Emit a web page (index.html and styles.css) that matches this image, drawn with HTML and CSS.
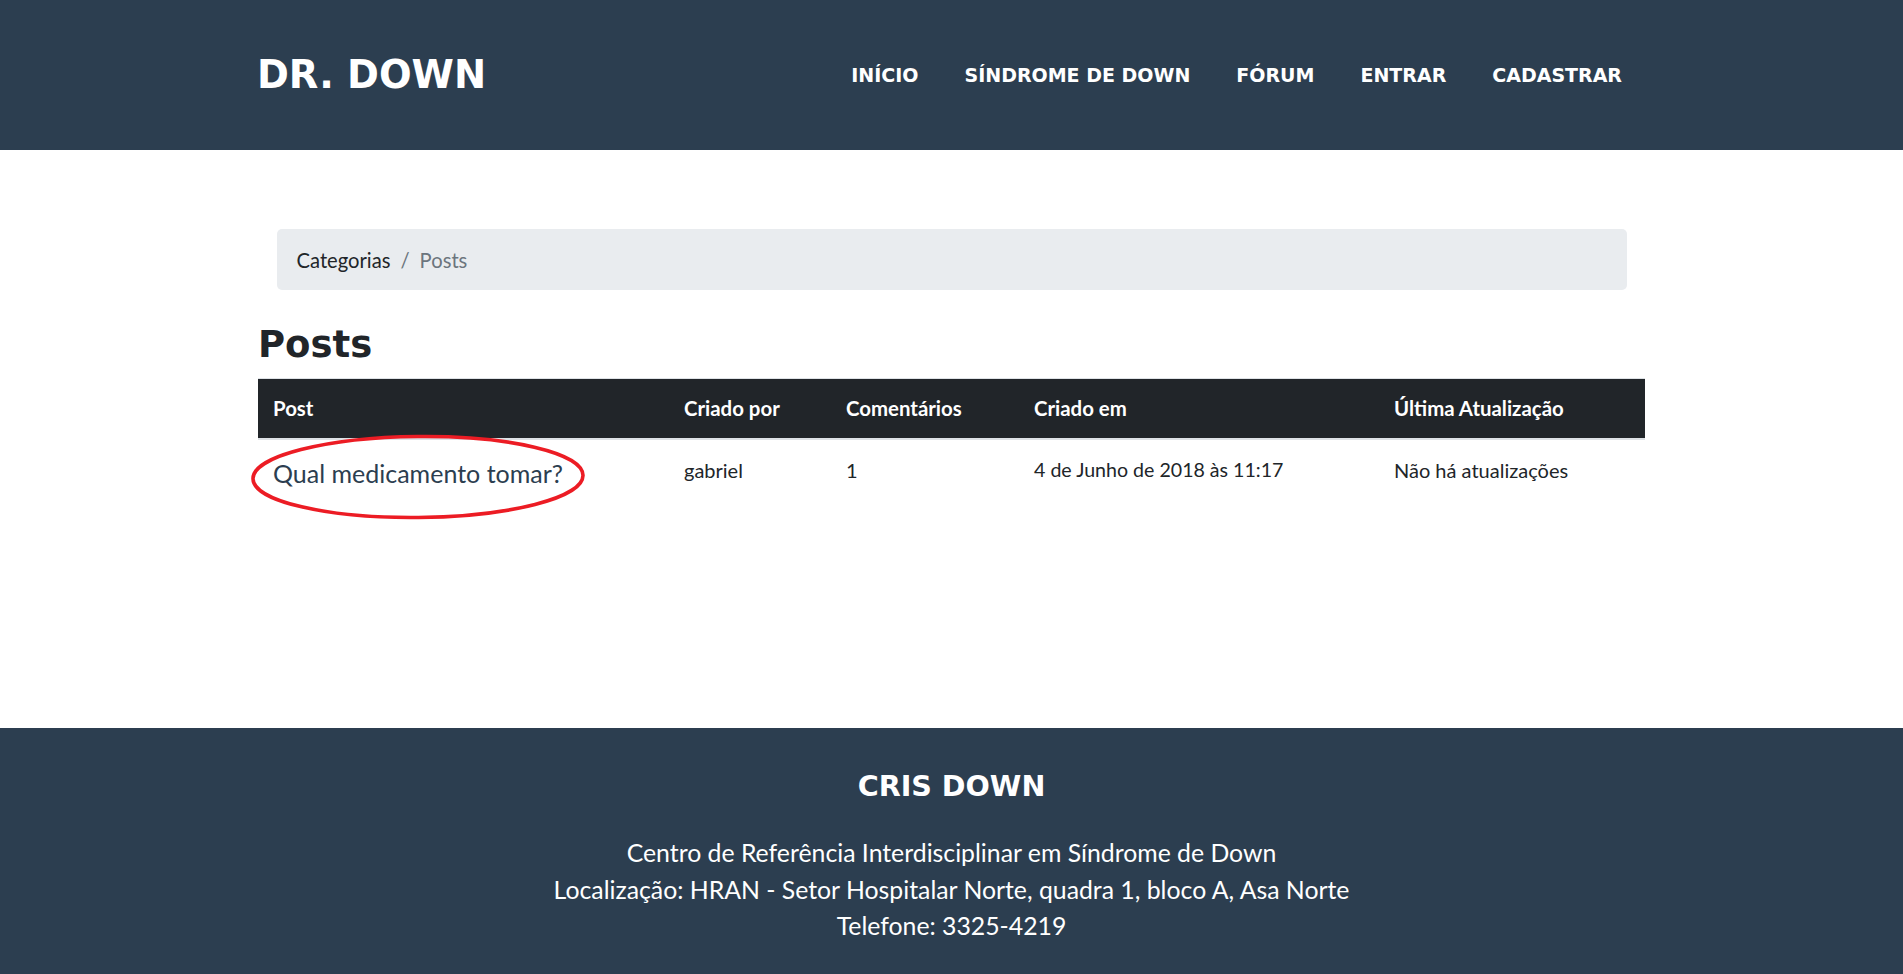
FILE: index.html
```html
<!DOCTYPE html>
<html lang="pt-BR">
<head>
<meta charset="utf-8">
<title>Dr. Down - Posts</title>
<link rel="stylesheet" href="styles.css">
</head>
<body>
<header class="site-header">
  <div class="container header-inner">
    <a class="brand" href="#">DR. DOWN</a>
    <nav class="nav">
      <a class="nav-link" href="#">INÍCIO</a>
      <a class="nav-link" href="#">SÍNDROME DE DOWN</a>
      <a class="nav-link" href="#">FÓRUM</a>
      <a class="nav-link" href="#">ENTRAR</a>
      <a class="nav-link" href="#">CADASTRAR</a>
    </nav>
  </div>
</header>

<main class="container main">
  <ol class="breadcrumb">
    <li class="crumb"><a href="#">Categorias</a></li>
    <li class="crumb-sep">/</li>
    <li class="crumb active">Posts</li>
  </ol>
  <h1 class="page-title">Posts</h1>
  <div class="table-wrap">
    <table class="posts">
      <colgroup>
        <col class="c1"><col class="c2"><col class="c3"><col class="c4"><col class="c5">
      </colgroup>
      <thead>
        <tr>
          <th>Post</th>
          <th>Criado por</th>
          <th>Comentários</th>
          <th>Criado em</th>
          <th>Última Atualização</th>
        </tr>
      </thead>
      <tbody>
        <tr>
          <td><a class="post-link" href="#">Qual medicamento tomar?</a></td>
          <td>gabriel</td>
          <td>1</td>
          <td class="date-cell">4 de Junho de 2018 às 11:17</td>
          <td>Não há atualizações</td>
        </tr>
      </tbody>
    </table>
    <svg class="annotation" width="340" height="90" viewBox="0 0 340 90" aria-hidden="true">
      <ellipse cx="168" cy="44" rx="165" ry="40.5" fill="none" stroke="#ec1c24" stroke-width="3.6" transform="rotate(-0.6 168 44)"/>
    </svg>
  </div>
</main>

<footer class="site-footer">
  <h3 class="footer-title">CRIS DOWN</h3>
  <p class="footer-text">Centro de Referência Interdisciplinar em Síndrome de Down<br>Localização: HRAN - Setor Hospitalar Norte, quadra 1, bloco A, Asa Norte<br>Telefone: 3325-4219</p>
</footer>
</body>
</html>
```

FILE: styles.css
```css
* { box-sizing: border-box; }

html, body {
  margin: 0;
  padding: 0;
}

body {
  font-family: Lato, "Liberation Sans", sans-serif;
  font-size: 20px;
  line-height: 1.5;
  color: #212529;
  background: #fff;
}

a { text-decoration: none; color: inherit; }

.container {
  width: 1387px;
  margin: 0 auto;
}

/* Header */
.site-header {
  background: #2c3e50;
  height: 150px;
}

.header-inner {
  height: 150px;
  display: flex;
  align-items: center;
  justify-content: space-between;
}

.brand {
  font-family: "DejaVu Sans", sans-serif;
  font-weight: 700;
  font-size: 38.4px;
  line-height: 1;
  color: #fff;
  margin-left: -1px;
}

.nav {
  display: flex;
  align-items: center;
}

.nav-link {
  font-family: "DejaVu Sans", sans-serif;
  font-weight: 700;
  font-size: 19px;
  line-height: 1;
  color: #fff;
  padding: 0 23px;
}

/* Main */
.main {
  min-height: 578px;
  padding-top: 79px;
}

.breadcrumb {
  list-style: none;
  width: 1350px;
  margin: 0 auto;
  padding: 15px 20px;
  height: 61px;
  background: #e9ecef;
  border-radius: 5px;
  display: flex;
  align-items: center;
  font-size: 20.2px;
  line-height: 30px;
}

.crumb a { color: #212529; }
.crumb-sep { color: #6c757d; padding: 0 10px; }
.crumb.active { color: #6c757d; }

.page-title {
  font-family: "DejaVu Sans", sans-serif;
  font-weight: 700;
  font-size: 37px;
  line-height: 1.2;
  color: #212529;
  margin: 33px 0 11px 0;
}

.table-wrap {
  position: relative;
}

.posts {
  width: 100%;
  border-collapse: collapse;
  table-layout: fixed;
  border-top: 1px solid #dee2e6;
}

.c1 { width: 411px; }
.c2 { width: 162px; }
.c3 { width: 188px; }
.c4 { width: 360px; }
.c5 { width: 266px; }

.posts th {
  background: #212529;
  color: #fff;
  font-weight: 700;
  font-size: 20.4px;
  line-height: 30px;
  text-align: left;
  padding: 14px 15px 15px 15px;
  border-bottom: 2px solid #dee2e6;
  white-space: nowrap;
}

.posts td {
  font-size: 20px;
  line-height: 30px;
  padding: 15px 15px;
  vertical-align: top;
  color: #212529;
}

.posts td.date-cell { font-size: 19.6px; }

.post-link {
  font-size: 25px;
  line-height: 36px;
  color: #2c3e50;
}

.annotation {
  position: absolute;
  left: -8px;
  top: 55px;
  overflow: visible;
}

/* Footer */
.site-footer {
  background: #2c3e50;
  color: #fff;
  text-align: center;
  padding: 41px 0 30px 0;
  height: 246px;
}

.footer-title {
  font-family: "DejaVu Sans", sans-serif;
  font-weight: 700;
  font-size: 28.6px;
  line-height: 1.2;
  margin: 0 0 32px 0;
}

.footer-text {
  font-size: 24.8px;
  line-height: 36.4px;
  margin: 0;
}
```
